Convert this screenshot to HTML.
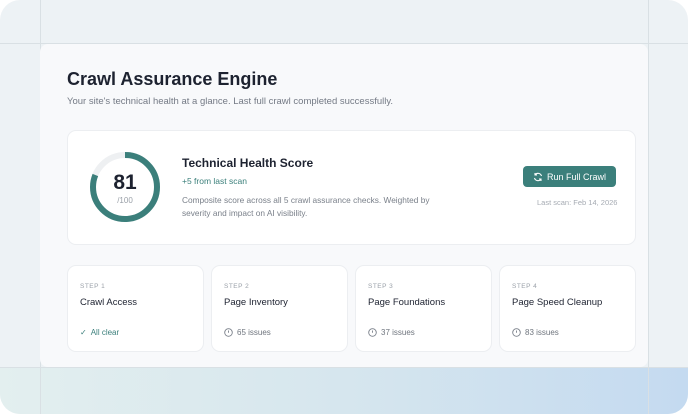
<!DOCTYPE html>
<html><head><style>
*{margin:0;padding:0;box-sizing:border-box}
body{width:688px;height:414px;overflow:hidden;background:#fff;font-family:"Liberation Sans",sans-serif;position:relative}
.bg{position:absolute;left:0;top:0;width:688px;height:414px;border-radius:20px;background:#edf2f5;overflow:hidden}
.bot{position:absolute;left:0;top:367px;width:688px;height:47px;background:linear-gradient(90deg,#e3efef 0%,#d6e6ee 50%,#c4daf0 100%)}
.vl{position:absolute;top:0;width:1px;height:414px;background:#d9e0e4}
.hl{position:absolute;left:0;height:1px;width:688px;background:#d9e0e4}
.main{position:absolute;left:40px;top:44px;width:608px;height:323px;background:#f8f9fb;border-radius:8px}
h1{position:absolute;left:67px;top:69px;font-size:18px;font-weight:bold;color:#1d2230}
.sub{position:absolute;left:67px;top:96px;font-size:9.5px;color:#747a85}
.card{position:absolute;background:#fff;border:1px solid #eceef1;border-radius:9px}
.t{position:absolute;left:182px;top:156px;font-size:12px;font-weight:bold;color:#1d2230}
.g{position:absolute;left:182px;top:176px;font-size:8.5px;color:#3a7f7a}
.d{position:absolute;left:182px;top:194px;font-size:8.3px;color:#7a808a;line-height:13px;width:260px}
.btn{position:absolute;left:523px;top:166px;width:93px;height:21px;background:#3b7f7b;border-radius:4px;color:#fff;font-size:9px;display:flex;align-items:center;justify-content:center;gap:4px}
.ls{position:absolute;left:537px;top:198px;font-size:7.5px;color:#a6abb3}
.step{font-size:6.5px;color:#9aa0a8;letter-spacing:.5px;position:absolute;left:12px;top:17px}
.nm{position:absolute;left:12px;top:31px;font-size:9.5px;color:#1d2230}
.st{position:absolute;left:12px;top:62px;font-size:8px;color:#6f757e;display:flex;align-items:center;gap:4px}
</style></head><body>
<div class="bg">
<div class="bot"></div>
<div class="vl" style="left:40px"></div><div class="vl" style="left:648px"></div>
<div class="hl" style="top:43px"></div><div class="hl" style="top:367px"></div>
</div>
<div class="main"></div>
<h1>Crawl Assurance Engine</h1>
<div class="sub">Your site's technical health at a glance. Last full crawl completed successfully.</div>
<div class="card" style="left:67px;top:130px;width:569px;height:115px"></div>
<svg style="position:absolute;left:89px;top:151px" width="72" height="72" viewBox="0 0 72 72">
<circle cx="36" cy="36" r="32" fill="none" stroke="#eef0f2" stroke-width="6"/>
<circle cx="36" cy="36" r="32" fill="none" stroke="#3b7f7b" stroke-width="6" stroke-dasharray="162.9 201.1" transform="rotate(-90 36 36)"/>
<text x="36" y="38" text-anchor="middle" font-family="Liberation Sans" font-size="21" font-weight="bold" fill="#1d2230">81</text>
<text x="36" y="52" text-anchor="middle" font-family="Liberation Sans" font-size="8" fill="#9aa0a8">/100</text>
</svg>
<div class="t">Technical Health Score</div>
<div class="g">+5 from last scan</div>
<div class="d">Composite score across all 5 crawl assurance checks. Weighted by severity and impact on AI visibility.</div>
<div class="btn"><svg width="10" height="10" viewBox="0 0 10 10" fill="none" stroke="#fff" stroke-width="1.1"><path d="M8.5 4A3.6 3.6 0 0 0 2 3M1.5 6A3.6 3.6 0 0 0 8 7"/><path d="M2 1v2h2M8 9V7H6"/></svg>Run Full Crawl</div>
<div class="ls">Last scan: Feb 14, 2026</div>

<div class="card" style="left:67px;top:265px;width:137px;height:87px"><div class="step">STEP 1</div><div class="nm">Crawl Access</div><div class="st" style="color:#3b7f7b"><span>✓</span> All clear</div></div>
<div class="card" style="left:211px;top:265px;width:137px;height:87px"><div class="step">STEP 2</div><div class="nm">Page Inventory</div><div class="st"><svg width="9" height="9" viewBox="0 0 9 9" fill="none" stroke="#7a808a" stroke-width=".9"><circle cx="4.5" cy="4.5" r="3.8"/><path d="M4.5 2.5v2.3"/></svg> 65 issues</div></div>
<div class="card" style="left:355px;top:265px;width:137px;height:87px"><div class="step">STEP 3</div><div class="nm">Page Foundations</div><div class="st"><svg width="9" height="9" viewBox="0 0 9 9" fill="none" stroke="#7a808a" stroke-width=".9"><circle cx="4.5" cy="4.5" r="3.8"/><path d="M4.5 2.5v2.3"/></svg> 37 issues</div></div>
<div class="card" style="left:499px;top:265px;width:137px;height:87px"><div class="step">STEP 4</div><div class="nm">Page Speed Cleanup</div><div class="st"><svg width="9" height="9" viewBox="0 0 9 9" fill="none" stroke="#7a808a" stroke-width=".9"><circle cx="4.5" cy="4.5" r="3.8"/><path d="M4.5 2.5v2.3"/></svg> 83 issues</div></div>
</body></html>
